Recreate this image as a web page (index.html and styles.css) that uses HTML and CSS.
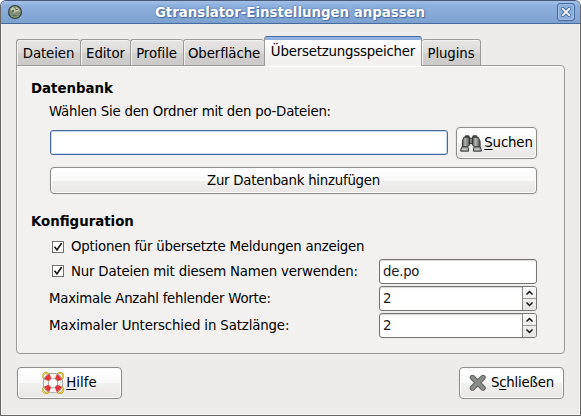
FILE: index.html
```html
<!DOCTYPE html>
<html lang="de">
<head>
<meta charset="utf-8">
<title>Gtranslator-Einstellungen anpassen</title>
<link rel="stylesheet" href="styles.css">
</head>
<body>
<div class="window">
  <header class="titlebar">
    <svg class="app-icon" width="16" height="16" viewBox="0 0 16 16">
      <circle cx="8" cy="8" r="7" fill="#303a35"/>
      <circle cx="8" cy="8" r="5.9" fill="#829079"/>
      <path d="M3 5l3-2 2 2 1 3-2 1-2-2zM9 3l3 2 1 3-2-1-2 1z" fill="#c5c6ae"/>
      <path d="M5 6h2v2H5zM9 5h2v1H9zM5 11h6l-2 1H6z" fill="#59695e"/>
    </svg>
    <h1 class="title">Gtranslator-Einstellungen anpassen</h1>
    <button class="close" aria-label="Fenster schließen">
      <svg width="10" height="10" viewBox="0 0 10 10"><path d="M1.8 1.8l6.4 6.4M8.2 1.8L1.8 8.2" stroke="#3f659b" stroke-width="3.6" stroke-linecap="square"/><path d="M1.8 1.8l6.4 6.4M8.2 1.8L1.8 8.2" stroke="#fff" stroke-width="1.9" stroke-linecap="square"/></svg>
    </button>
  </header>
  <main class="content">
    <nav class="tabs">
      <div class="tab t-files"><span>Dateien</span></div>
      <div class="tab t-editor"><span>Editor</span></div>
      <div class="tab t-profile"><span>Profile</span></div>
      <div class="tab t-ui"><span>Oberfläche</span></div>
      <div class="tab active t-memory"><span>Übersetzungsspeicher</span></div>
      <div class="tab t-plugins"><span>Plugins</span></div>
    </nav>
    <section class="panel">
      <h2 class="heading h-db">Datenbank</h2>
      <p class="label l-folder">Wählen Sie den Ordner mit den po-Dateien:</p>
      <div class="search-row">
        <div class="entry focused"></div>
        <button class="button search">
          <svg width="22" height="19" viewBox="0 0 23 19">
            <defs><linearGradient id="b" x2="1"><stop stop-color="#4a4d4a"/><stop offset=".4" stop-color="#b4b7b1"/><stop offset="1" stop-color="#4c4f4c"/></linearGradient></defs>
            <g stroke="#30332f" stroke-width="1">
              <path d="M5.500 3V1.500h4V3M13.500 3V1.500h4V3" fill="#555852"/>
              <path d="M9.500 4h4v5.500h-4z" fill="#888b85"/>
              <path d="M4 3h6v8l-2 2H2.500V7z" fill="url(#b)"/>
              <path d="M13 3h6l2 4v6h-6l-2-2z" fill="url(#b)"/>
              <path d="M2 13h6l1 2v2.500H.8V16zM15 13h6l1.300 3v1.500H14V15z" fill="#a5a8a1"/>
            </g>
            <path d="M2.500 15.500h4M16 15.500h4" stroke="#d8dad5"/>
          </svg>
          <span><u>S</u>uchen</span>
        </button>
      </div>
      <button class="button add"><span>Zur Datenbank hinzufügen</span></button>
      <h2 class="heading h-config">Konfiguration</h2>
      <div class="check-row first">
        <svg class="check" width="13" height="13" viewBox="0 0 13 13"><rect x=".5" y=".5" width="11" height="11" fill="#fff" stroke="#73736f"/><path d="M2.500 5.700l2.500 3.200L9.700 2" fill="none" stroke="#1a1a1a" stroke-width="1.700"/></svg>
        <span class="label l-options">Optionen für übersetzte Meldungen anzeigen</span>
      </div>
      <div class="field-row check-row">
        <svg class="check" width="13" height="13" viewBox="0 0 13 13"><rect x=".5" y=".5" width="11" height="11" fill="#fff" stroke="#73736f"/><path d="M2.500 5.700l2.500 3.200L9.700 2" fill="none" stroke="#1a1a1a" stroke-width="1.700"/></svg>
        <span class="label l-only">Nur Dateien mit diesem Namen verwenden:</span>
        <div class="entry small"><span class="value">de.po</span></div>
      </div>
      <div class="field-row">
        <span class="label l-missing">Maximale Anzahl fehlender Worte:</span>
        <div class="entry small"><span class="value">2</span><div class="spin"><svg viewBox="0 0 13 11"><path d="M3.500 7.500l3-3 3 3"/></svg><svg viewBox="0 0 13 11"><path d="M3.500 3.500l3 3 3-3"/></svg></div></div>
      </div>
      <div class="field-row">
        <span class="label l-length">Maximaler Unterschied in Satzlänge:</span>
        <div class="entry small"><span class="value">2</span><div class="spin"><svg viewBox="0 0 13 11"><path d="M3.500 7.500l3-3 3 3"/></svg><svg viewBox="0 0 13 11"><path d="M3.500 3.500l3 3 3-3"/></svg></div></div>
      </div>
    </section>
    <footer class="actions">
      <button class="button help">
        <svg width="22" height="22" viewBox="0 0 22 22">
          <g fill="none" stroke="#b8961a" stroke-width="1.800"><circle cx="4" cy="4" r="3"/><circle cx="18" cy="4" r="3"/><circle cx="4" cy="18" r="3"/><circle cx="18" cy="18" r="3"/></g>
          <g fill="none" stroke="#f2df72" stroke-width=".8"><circle cx="4" cy="4" r="3"/><circle cx="18" cy="4" r="3"/><circle cx="4" cy="18" r="3"/><circle cx="18" cy="18" r="3"/></g>
          <circle cx="11" cy="11" r="7.200" fill="#fff" stroke="#8b8782" stroke-width="6"/>
          <circle cx="11" cy="11" r="7.200" fill="none" stroke="#f5f3f0" stroke-width="4.700"/>
          <circle cx="11" cy="11" r="7.200" fill="none" stroke="#e2353a" stroke-width="4.700" stroke-dasharray="5.650 5.660" stroke-dashoffset="-2.830"/>
        </svg>
        <span><u>H</u>ilfe</span>
      </button>
      <button class="button quit">
        <svg width="18" height="18" viewBox="0 0 18 18"><path d="M3.500 3.500l10.500 10.500M14 3.500L3.500 14" stroke="#5b5e5a" stroke-width="5.400" stroke-linecap="round"/><path d="M3.500 3.500l10.500 10.500M14 3.500L3.500 14" stroke="#8b8d89" stroke-width="3.600" stroke-linecap="round"/></svg>
        <span>S<u>c</u>hließen</span>
      </button>
    </footer>
  </main>
</div>
</body>
</html>
```
FILE: styles.css
```css
* { box-sizing: border-box; }
html, body { margin: 0; height: 100%; background: #fff; overflow: hidden; }
body { font: 13.333px/18px "DejaVu Sans", sans-serif; color: #000; }
h1, h2, p { margin: 0; font-size: inherit; white-space: nowrap; }
svg { display: block; flex: none; }
button { font: inherit; color: inherit; padding: 0; }
span { white-space: nowrap; }
u { text-decoration-thickness: 1px; text-underline-offset: 2px; text-decoration-skip-ink: none; }

.window { width: 581px; height: 416px; display: flex; flex-direction: column; border: 1px solid #696865; border-top-color: #45597d; border-radius: 6px 6px 0 0; background: #edeceb; overflow: hidden; }
.titlebar { height: 23px; flex: none; display: flex; align-items: center; padding: 0 5px 0 6px; background: linear-gradient(#a5c0e6, #8fb0de 20%, #7da2d0); border-bottom: 1px solid #446a9f; }
.title { flex: 1; padding-top: 1px; text-align: center; color: #fff; text-shadow: 0 0 2px #3d629b, 1px 1px 1px #4a71a8; }
.close { width: 18px; height: 18px; display: flex; align-items: center; justify-content: center; border: 1px solid #43699f; border-radius: 3px; background: #8caedb; box-shadow: inset 0 0 0 1px #a3bfe4; }
.content { flex: 1; display: flex; flex-direction: column; padding: 12px 15px 0 14px; border: solid #f7f7f6; border-width: 0 1px 1px; }

.tabs { display: flex; align-items: flex-end; height: 30px; position: relative; z-index: 1; margin-bottom: -1px; }
.tab { height: 27px; display: flex; justify-content: center; padding-top: 5px; border: 1px solid #9b9a97; border-right: 0; border-radius: 3px 3px 0 0; background: linear-gradient(#e6e5e4, #dcdbda 50%, #d2d1cf 51%, #cbcac8); box-shadow: inset 1px 1px #f2f2f1; letter-spacing: -.1px; }
.tab.active { height: 30px; padding-top: 6px; border-color: #4a6fa4 #9b9a97 transparent; border-right: 1px solid #9b9a97; background: linear-gradient(#8fb2e2 0 4px, #fff 4px, #f2f1f0 75%); background-origin: border-box; box-shadow: none; letter-spacing: -.2px; }
.t-files { width: 64px; }
.t-editor { width: 50px; }
.t-profile { width: 53px; padding-right: 1px; }
.t-ui { width: 81px; }
.t-memory { width: 158px; }
.t-plugins { width: 59px; border-right: 1px solid #9b9a97; border-left: 0; }

.panel { width: 549px; height: 289px; flex: none; padding: 14px 27px 0 33px; border: 1px solid #9b9a97; border-radius: 0 4px 4px 4px; background: #f2f1f0; box-shadow: inset 1px 1px #fff; }
.heading { margin-left: -19px; height: 18px; }
.label { white-space: nowrap; }
.l-folder { margin: 5px 0 0 -1px; letter-spacing: -.245px; }
.l-options { letter-spacing: -.22px; }
.l-only { letter-spacing: -.19px; }
.l-missing { letter-spacing: -.25px; }
.l-length { letter-spacing: -.14px; }
.search-row { display: flex; align-items: flex-start; justify-content: space-between; height: 32px; margin-top: 6px; }
.entry { width: 398px; height: 25px; border: 1px solid #767672; border-radius: 3px; background: #fff; box-shadow: inset 0 1px 1px #d8d8d6, 0 0 0 1px #efeeed; }
.focused { margin-top: 3px; border-color: #47699e; box-shadow: inset 0 0 0 1px #c8d7ed; }
.button { display: flex; align-items: center; justify-content: center; height: 32px; border: 1px solid #8d8d89; border-radius: 4px; background: linear-gradient(#fff, #f9f9f9 50%, #f0f0ef 51%, #e8e7e6); box-shadow: 0 0 0 1px #e9e8e7, inset 0 0 0 1px #fbfbfb; }
.search { width: 81px; letter-spacing: -.15px; }
.search svg { margin-right: 2px; }
.add { width: 100%; height: 27px; margin-top: 8px; letter-spacing: -.25px; }
.h-config { margin-top: 19px; }
.check-row { display: flex; align-items: center; }
.check { margin: 1px 6px 0 2px; }
.first { height: 25px; margin-top: 3px; }
.field-row { display: flex; align-items: center; height: 25px; margin-bottom: 2px; margin-left: -1px; }
.field-row .check { margin-left: 3px; margin-top: 0; }
.small { width: 158px; margin-left: auto; padding-left: 3px; display: flex; align-items: center; overflow: hidden; color: #1a1a1a; }
.value { letter-spacing: -.25px; }
.spin { width: 14px; height: 23px; margin-left: auto; border-left: 1px solid #8a8a87; background: linear-gradient(#fafafa, #e5e4e3); }
.spin svg { width: 13px; height: 11px; fill: none; stroke: #111; stroke-width: 1.5; }
.spin svg + svg { height: 12px; border-top: 1px solid #9b9a97; }

.actions { display: flex; justify-content: space-between; width: 549px; margin-top: 13px; padding: 0 1px; }
.help, .quit { width: 105px; }
.help svg { margin-right: 2px; }
.quit { letter-spacing: -.2px; }
.quit svg { margin-right: 4px; }
```
